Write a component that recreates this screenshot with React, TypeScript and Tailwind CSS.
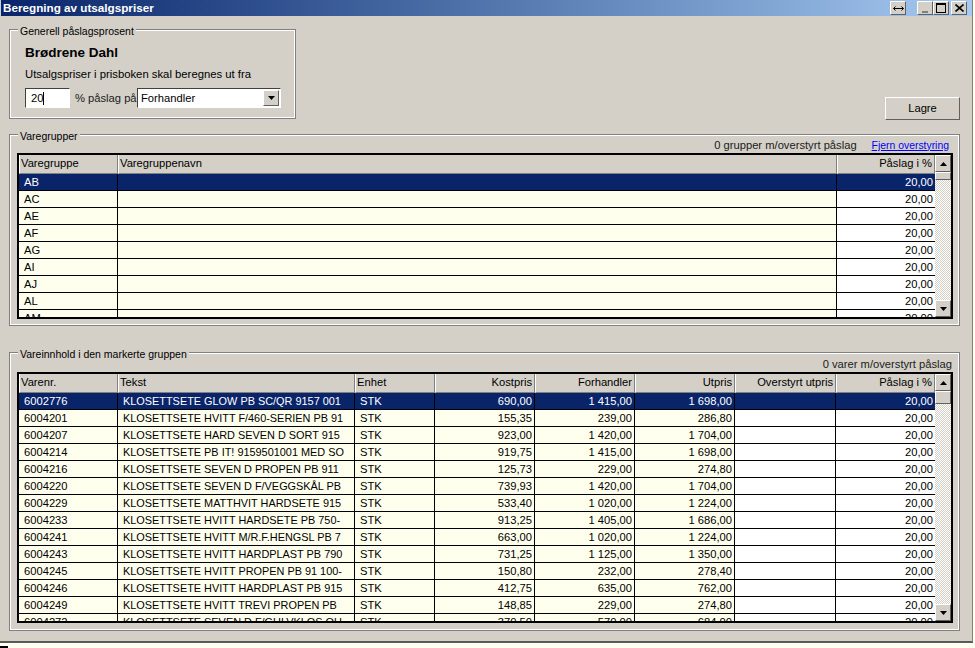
import React from "react";

const groups = ["AB", "AC", "AE", "AF", "AG", "AI", "AJ", "AL", "AM"];
const items: string[][] = [
  ["6002776", "KLOSETTSETE GLOW PB SC/QR 9157 001", "STK", "690,00", "1 415,00", "1 698,00"],
  ["6004201", "KLOSETTSETE HVITT F/460-SERIEN PB 91", "STK", "155,35", "239,00", "286,80"],
  ["6004207", "KLOSETTSETE HARD SEVEN D SORT 915", "STK", "923,00", "1 420,00", "1 704,00"],
  ["6004214", "KLOSETTSETE PB IT! 9159501001 MED SO", "STK", "919,75", "1 415,00", "1 698,00"],
  ["6004216", "KLOSETTSETE SEVEN D PROPEN PB 911", "STK", "125,73", "229,00", "274,80"],
  ["6004220", "KLOSETTSETE SEVEN D F/VEGGSKÅL PB", "STK", "739,93", "1 420,00", "1 704,00"],
  ["6004229", "KLOSETTSETE MATTHVIT HARDSETE 915", "STK", "533,40", "1 020,00", "1 224,00"],
  ["6004233", "KLOSETTSETE HVITT HARDSETE PB 750-", "STK", "913,25", "1 405,00", "1 686,00"],
  ["6004241", "KLOSETTSETE HVITT M/R.F.HENGSL PB 7", "STK", "663,00", "1 020,00", "1 224,00"],
  ["6004243", "KLOSETTSETE HVITT HARDPLAST PB 790", "STK", "731,25", "1 125,00", "1 350,00"],
  ["6004245", "KLOSETTSETE HVITT PROPEN PB 91 100-", "STK", "150,80", "232,00", "278,40"],
  ["6004246", "KLOSETTSETE HVITT HARDPLAST PB 915", "STK", "412,75", "635,00", "762,00"],
  ["6004249", "KLOSETTSETE HVITT TREVI PROPEN PB", "STK", "148,85", "229,00", "274,80"],
  ["6004272", "KLOSETTSETE SEVEN D F/GULVKLOS OU", "STK", "370,50", "570,00", "684,00"],
];

const raised = "border border-t-white border-l-white border-r-[#606060] border-b-[#606060]";

function Group({ title, className, children }: { title: string; className: string; children: React.ReactNode }) {
  return (
    <div className={`relative border border-[#808080] ${className}`}>
      <div className="h-full border border-white">{children}</div>
      <div className="absolute left-2 top-[-6px] bg-[#d4d0c8] px-[2px] text-[10.5px] leading-[14px] whitespace-nowrap">{title}</div>
    </div>
  );
}

function Head({ label, right }: { label: string; right?: boolean }) {
  return (
    <div className={`h-[19px] bg-[#d4d0c8] border-b border-b-[#808080] border-l border-l-white border-r border-r-[#808080] pl-[1px] pr-[2px] leading-[17px] overflow-hidden whitespace-nowrap ${right ? "text-right" : ""}`}>
      {label}
    </div>
  );
}

function Cell({ text, right, white, sel, line = true, tight }: { text?: string; right?: boolean; white?: boolean; sel?: boolean; line?: boolean; tight?: boolean }) {
  const bg = sel ? "bg-[#0a246a] text-white" : white ? "bg-white" : "bg-[#ffffee]";
  return (
    <div className={`h-[17px] border-b border-black ${line ? "border-r" : ""} ${bg} ${right ? "text-right pr-[2px]" : "pl-[5px]"} ${tight ? "text-[10.9px]" : ""} leading-[16px] overflow-hidden whitespace-nowrap`}>
      {text}
    </div>
  );
}

function Arrow({ up }: { up?: boolean }) {
  return (
    <div className={`h-[17px] w-[16px] shrink-0 bg-[#d4d0c8] ${raised} flex items-center justify-center`}>
      <svg width="7" height="4" viewBox="0 0 7 4">
        <path d={up ? "M3.5 0L7 4H0Z" : "M0 0H7L3.5 4Z"} fill="#000" />
      </svg>
    </div>
  );
}

function Scrollbar({ thumb }: { thumb: string }) {
  return (
    <div className="w-[16px] shrink-0 flex flex-col bg-[repeating-conic-gradient(#ffffff_0_25%,#d4d0c8_0_50%)] bg-[length:2px_2px]">
      <Arrow up />
      <div className={`${thumb} w-[16px] shrink-0 bg-[#d4d0c8] ${raised}`} />
      <div className="flex-1" />
      <Arrow />
    </div>
  );
}

const capBtn = `w-[16px] h-[14px] bg-[#d4d0c8] ${raised}`;

export default function App() {
  return (
    <div className="w-[975px] h-[648px] overflow-hidden flex flex-col bg-[#fffff0] text-[11.2px] text-black font-['Liberation_Sans',Arial,sans-serif]">
      <div className="h-[643px] shrink-0 flex flex-col bg-[#d4d0c8] border-b-2 border-b-[#5a5a5a] border-r border-r-[#808080] w-[973px]">
        <div className="h-4 shrink-0 ml-px flex items-center pl-[2px] pr-[5px] bg-gradient-to-r from-[#0a246a] to-[#a6caf0] text-white text-[11.7px] font-bold leading-4">
          <span className="flex-1">Beregning av utsalgspriser</span>
          <div className={`${capBtn} mr-[11px] flex items-center justify-center`}>
            <svg width="11" height="7" viewBox="0 0 11 7"><path d="M0.5 3.5H10.5M2.5 1.5L0.5 3.5L2.5 5.5M8.5 1.5L10.5 3.5L8.5 5.5" stroke="#000" fill="none" /></svg>
          </div>
          <div className={`${capBtn} flex items-end justify-center pb-[1px]`}><div className="w-[6px] h-[2px] bg-[#808080]" /></div>
          <div className={`${capBtn} flex items-center justify-center`}><div className="w-[10px] h-[10px] border border-t-2 border-black" /></div>
          <div className={`${capBtn} ml-[2px] flex items-center justify-center`}>
            <svg width="9" height="8" viewBox="0 0 9 8"><path d="M0.5 0.5L8.5 7.5M8.5 0.5L0.5 7.5" stroke="#000" strokeWidth="1.6" /></svg>
          </div>
        </div>

        <div className="flex-1 flex flex-col pl-[9px] pr-[12px]">
          <div className="flex items-end justify-between mt-[13px]">
            <Group title="Generell påslagsprosent" className="w-[287px] h-[90px]">
              <div className="pl-[14px] pt-[14px]">
                <div className="font-bold text-[13.5px] leading-[16px]">Brødrene Dahl</div>
                <div className="mt-[6px] leading-[14px] text-[11.3px]">Utsalgspriser i prisboken skal beregnes ut fra</div>
                <div className="mt-[7px] flex items-center">
                  <div className="w-[45px] h-[20px] bg-white border border-t-[#404040] border-l-[#404040] border-r-white border-b-white pl-[5px] flex items-center">
                    20<span className="w-px h-[13px] bg-black" />
                  </div>
                  <span className="ml-[5px] w-[62px] text-[#202020] whitespace-nowrap">% påslag på</span>
                  <div className="w-[144px] h-[20px] bg-white border border-t-[#404040] border-l-[#404040] border-r-white border-b-white flex items-center pl-[3px]">
                    <span className="flex-1">Forhandler</span>
                    <div className={`w-[16px] h-[16px] mr-px bg-[#d4d0c8] ${raised} flex items-center justify-center`}>
                      <svg width="7" height="4" viewBox="0 0 7 4"><path d="M0 0H7L3.5 4Z" fill="#000" /></svg>
                    </div>
                  </div>
                </div>
              </div>
            </Group>
            <button className={`w-[75px] h-[23px] mb-[-1px] bg-[#d4d0c8] ${raised}`}>Lagre</button>
          </div>

          <Group title="Varegrupper" className="mt-[15px] w-[951px] h-[192px]">
            <div className="h-[17px] flex items-center justify-end pr-[9px] pt-[2px] whitespace-nowrap">
              <span className="text-[#202020]">0 grupper m/overstyrt påslag</span>
              <a className="ml-[15px] text-[10.4px] text-[#0000ff] underline">Fjern overstyring</a>
            </div>
            <div className="ml-[6px] w-[936px] h-[166px] border-2 border-black flex overflow-hidden">
              <div className="flex-1 overflow-hidden">
                <div className="grid grid-cols-[99px_719px_1fr]">
                  <Head label="Varegruppe" />
                  <Head label="Varegruppenavn" />
                  <Head label="Påslag i %" right />
                  {groups.map((g, i) => (
                    <React.Fragment key={g}>
                      <Cell text={g} sel={i === 0} />
                      <Cell sel={i === 0} />
                      <Cell text="20,00" right white sel={i === 0} line={false} />
                    </React.Fragment>
                  ))}
                </div>
              </div>
              <Scrollbar thumb="h-[8px]" />
            </div>
          </Group>

          <Group title="Vareinnhold i den markerte gruppen" className="mt-[26px] w-[951px] h-[279px]">
            <div className="h-[18px] flex items-center justify-end pr-[6px] pt-[2px] whitespace-nowrap text-[#202020]">0 varer m/overstyrt påslag</div>
            <div className="ml-[6px] w-[936px] h-[251px] border-2 border-black flex overflow-hidden">
              <div className="flex-1 overflow-hidden">
                <div className="grid grid-cols-[99px_237px_80px_100px_100px_100px_101px_1fr]">
                  <Head label="Varenr." />
                  <Head label="Tekst" />
                  <Head label="Enhet" />
                  <Head label="Kostpris" right />
                  <Head label="Forhandler" right />
                  <Head label="Utpris" right />
                  <Head label="Overstyrt utpris" right />
                  <Head label="Påslag i %" right />
                  {items.map((r, i) => (
                    <React.Fragment key={r[0]}>
                      <Cell text={r[0]} sel={i === 0} />
                      <Cell text={r[1]} sel={i === 0} tight />
                      <Cell text={r[2]} sel={i === 0} />
                      <Cell text={r[3]} right sel={i === 0} />
                      <Cell text={r[4]} right sel={i === 0} />
                      <Cell text={r[5]} right sel={i === 0} />
                      <Cell white sel={i === 0} />
                      <Cell text="20,00" right white sel={i === 0} line={false} />
                    </React.Fragment>
                  ))}
                </div>
              </div>
              <Scrollbar thumb="h-[13px]" />
            </div>
          </Group>
        </div>
      </div>
      <div className="flex-1 relative"><div className="absolute left-0 bottom-0 w-[8px] h-[2px] bg-black" /></div>
    </div>
  );
}
